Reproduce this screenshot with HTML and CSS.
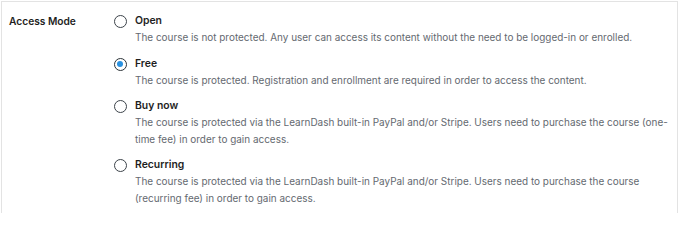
FILE: index.html
```html
<!DOCTYPE html>
<html>
<head>
<meta charset="utf-8">
<link rel="stylesheet" href="styles.css">
</head>
<body>
<div class="panel">
  <div class="row">
    <div class="row-label">Access Mode</div>
    <div class="options">
      <div class="option">
        <span class="radio"></span>
        <div class="option-text">
          <div class="option-title">Open</div>
          <div class="option-desc">The course is not protected. Any user can access its content without the need to be logged-in or enrolled.</div>
        </div>
      </div>
      <div class="option">
        <span class="radio checked"></span>
        <div class="option-text">
          <div class="option-title">Free</div>
          <div class="option-desc">The course is protected. Registration and enrollment are required in order to access the content.</div>
        </div>
      </div>
      <div class="option">
        <span class="radio"></span>
        <div class="option-text">
          <div class="option-title">Buy now</div>
          <div class="option-desc">The course is protected via the LearnDash built-in PayPal and/or Stripe. Users need to purchase the course (one-time fee) in order to gain access.</div>
        </div>
      </div>
      <div class="option">
        <span class="radio"></span>
        <div class="option-text">
          <div class="option-title">Recurring</div>
          <div class="option-desc">The course is protected via the LearnDash built-in PayPal and/or Stripe. Users need to purchase the course (recurring fee) in order to gain access.</div>
        </div>
      </div>
    </div>
  </div>
</div>
</body>
</html>
```

FILE: styles.css
```css
html, body {
  margin: 0;
  padding: 0;
  background: #ffffff;
  height: 213px;
  overflow: hidden;
}
body {
  font-family: Inter, "Noto Sans", "Liberation Sans", sans-serif;
  font-size: 9.95px;
  line-height: 16.3px;
  color: #1e1e1e;
}
.panel {
  margin: 1px 2px 0 1px;
  border: 1px solid #e3e3e3;
  border-bottom: none;
  height: 212px;
  box-sizing: border-box;
  overflow: hidden;
}
.row {
  display: flex;
  padding: 11px 0 0 7px;
}
.row-label {
  width: 105px;
  flex: none;
  font-weight: 600;
  font-size: 10.2px;
}
.options {
  display: flex;
  flex-direction: column;
  gap: 10px;
}
.option {
  display: flex;
  align-items: flex-start;
}
.radio {
  flex: none;
  width: 13px;
  height: 13px;
  box-sizing: border-box;
  border: 1.3px solid #3c434a;
  border-radius: 50%;
  margin: 2px 8px 0 0;
  position: relative;
}
.radio.checked {
  border-color: #2c3338;
}
.radio.checked::after {
  content: "";
  position: absolute;
  left: 2.2px;
  top: 2.2px;
  width: 6px;
  height: 6px;
  border-radius: 50%;
  background: #2a91e0;
}
.option-title {
  font-weight: 600;
  font-size: 10.4px;
}
.option-desc {
  color: #646970;
  width: 540px;
}
```
